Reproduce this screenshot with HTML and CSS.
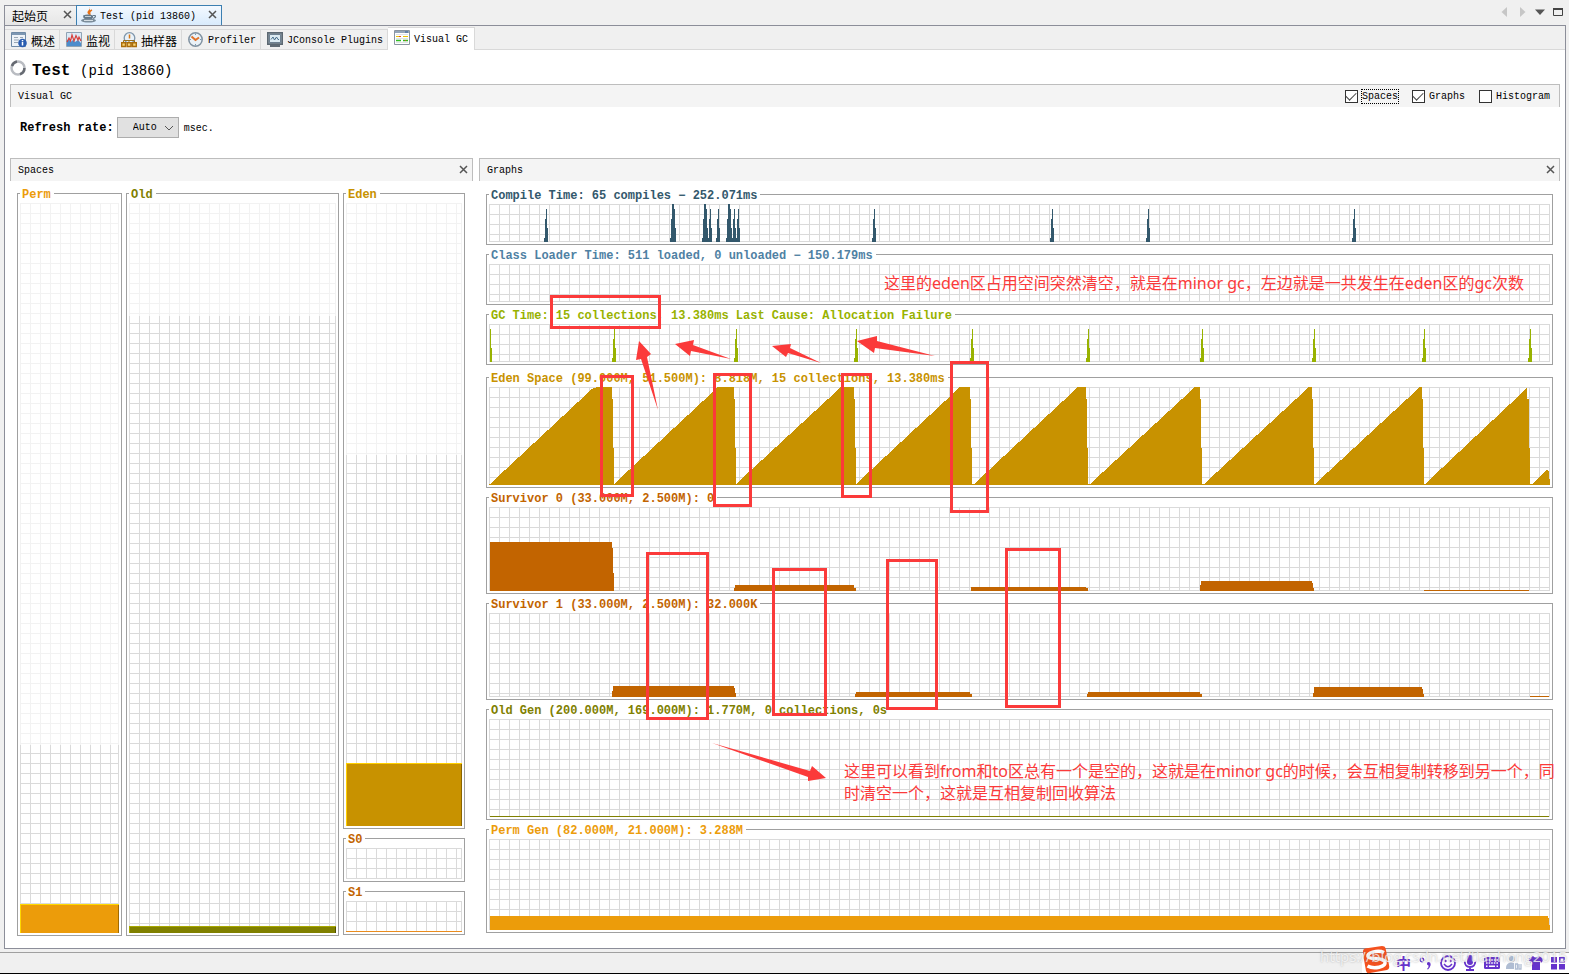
FILE: index.html
```html
<!DOCTYPE html>
<html lang="zh-CN">
<head>
<meta charset="utf-8">
<title>Java VisualVM - Test (pid 13860)</title>
<link rel="stylesheet" href="styles.css">
</head>
<body>
<div class="app">
  <header class="doc-bar">
    <nav class="doc-tabs">
      <div class="doc-tab"><a class="doc-link cjk" href="#start">起始页</a><button class="close" aria-label="关闭起始页"><svg viewBox="0 0 9 9"><path d="M1 1L8 8M8 1L1 8"/></svg></button></div>
      <div class="doc-tab doc-tab-active">
        <svg class="icon" viewBox="0 0 16 16"><path d="M8.500 0C10.500 2 6 3.500 6.500 6L8 8C8.500 5.500 10.500 4.500 9 2.500z" fill="#e8731a"/><path d="M11 3C8 4.500 8.500 5.500 9 8" fill="none" stroke="#e8731a" stroke-width="1.500"/><path d="M2 8.500Q7 6.500 12 8.500V10.500Q11 13 7.500 13T2.500 11z" fill="#64798a"/><path d="M12 8.500H14Q15.500 10 12 11.500" fill="none" stroke="#64798a" stroke-width="1.200"/><path d="M4 9.500H10" stroke="#c4d0d8"/><ellipse cx="7.500" cy="13.500" rx="7.500" ry="2" fill="#7b8d9b"/><path d="M3 13.500H12" stroke="#d5dee4"/></svg>
        <a class="doc-link" href="#test">Test (pid 13860)</a><button class="close" aria-label="关闭 Test"><svg viewBox="0 0 9 9"><path d="M1 1L8 8M8 1L1 8"/></svg></button>
      </div>
    </nav>
    <div class="window-tools">
      <button class="tool" aria-label="向左滚动"><svg viewBox="0 0 12 12"><path d="M9 1V11L3.500 6z" fill="#c6c6c6"/></svg></button>
      <button class="tool" aria-label="向右滚动"><svg viewBox="0 0 12 12"><path d="M4 1V11L9.500 6z" fill="#c6c6c6"/></svg></button>
      <button class="tool" aria-label="文档列表"><svg viewBox="0 0 12 12"><path d="M1 3.500H11L6 9z" fill="#555"/></svg></button>
      <button class="tool" aria-label="最大化"><svg viewBox="0 0 12 12"><path d="M1.500 2.500H10.500V9.500H1.500z" fill="none" stroke="#444"/><path d="M1 3H11" stroke="#444" stroke-width="2"/></svg></button>
    </div>
  </header>

  <main class="panel">
    <nav class="views">
      <a class="view cjk" href="#overview"><svg class="icon" viewBox="0 0 16 16"><path d="M.500 .500H14.500V14.500H.500z" fill="#eef3f8" stroke="#6f8aa6"/><path d="M1 2H14" stroke="#7d97b2" stroke-width="2"/><path d="M3 5.500H7M3 8H8M3 10.500H7M9 5.500H12" stroke="#9aa7b4"/><circle cx="11.500" cy="11" r="4.300" fill="#2a5db0"/><path d="M11.500 10V13.500M11.500 8V9.200" stroke="#fff" stroke-width="1.500"/></svg><span>概述</span></a>
      <a class="view cjk" href="#monitor"><svg class="icon" viewBox="0 0 16 16"><path d="M.500 .500H15.500V14.500H.500z" fill="#dceaf7" stroke="#8fa3b5"/><path d="M1 14V9L3 7 4.500 10 7 8 9 10 12 8 15 11V14z" fill="#4d8dcc"/><path d="M1 10L3 6 4.500 9 6 3 8 9 10 3.500 12 8 13 5 15 9" fill="none" stroke="#d8403c" stroke-width="1.200"/></svg><span>监视</span></a>
      <a class="view cjk" href="#sampler"><svg class="icon" viewBox="0 0 16 16"><circle cx="8.500" cy="6" r="5.300" fill="#e9f1f8" stroke="#7f96ab" stroke-width="1.300"/><path d="M8.500 2.500V6.500" stroke="#d87814" stroke-width="1.500"/><path d="M2.500 11V8.500H13.500V11M8 8.500V11" fill="none" stroke="#99711e"/><path d="M.700 10.700H4.500V14.500H.700zM6.200 10.700H10V14.500H6.200zM11.500 10.700H15.300V14.500H11.500z" fill="#f7d477" stroke="#ac6d09" stroke-width="1.400"/></svg><span>抽样器</span></a>
      <a class="view" href="#profiler"><svg class="icon" viewBox="0 0 16 16"><circle cx="7.500" cy="7.500" r="6.700" fill="#eaf1f7" stroke="#8192a1" stroke-width="1.500"/><path d="M7.500 1.500V3M7.500 12V13.500M1.500 7.500H3M12 7.500H13.500" stroke="#7997af"/><path d="M3.500 4.500L7.500 8 11 5.500" fill="none" stroke="#e0722a" stroke-width="2"/></svg><span>Profiler</span></a>
      <a class="view" href="#jconsole"><svg class="icon" viewBox="0 0 16 16"><path d="M.700 .700H15.300V12.300H.700z" fill="#8996a1" stroke="#5c6872" stroke-width="1.400"/><path d="M2.500 2.500H13.500V10.500H2.500z" fill="#dcebf2" stroke="#6d8090"/><path d="M4 7.500L6 5 7.500 8 9.500 5 11 7.500H12" fill="none" stroke="#456b89"/><path d="M3 14H13" stroke="#606b74" stroke-width="2"/></svg><span>JConsole Plugins</span></a>
      <a class="view view-active" href="#visualgc"><svg class="icon" viewBox="0 0 16 16"><path d="M.500 .500H15.500V14.500H.500z" fill="#fff" stroke="#8a95a0"/><path d="M1 2H15" stroke="#94a5b8" stroke-width="2"/><path d="M11 2H14" stroke="#315d94"/><path d="M2 4.500H14M2 8.500H14M2 12.500H14" stroke="#dfe4e8"/><path d="M2 6.500H7M9 6.500H14" stroke="#e8c500"/><path d="M2 10.500H7M9 10.500H14" stroke="#32bd24" stroke-width="1.500"/><path d="M5 6.500H7M11 10.500H12" stroke="#e34a25"/></svg><span>Visual GC</span></a>
    </nav>

    <div class="title-row">
      <svg class="icon" viewBox="0 0 16 16"><circle cx="8" cy="8" r="6.500" fill="none" stroke="#b9bcc2" stroke-width="2.500"/><path d="M2 6A6.500 6.500 0 0 1 7 1.600M14.400 8A6.500 6.500 0 0 1 10 14.200" fill="none" stroke="#666a72" stroke-width="2.500"/></svg>
      <h1 class="title">Test <span class="title-pid">(pid 13860)</span></h1>
    </div>

    <div class="bar">
      <h2 class="bar-title">Visual GC</h2>
      <div class="checks">
        <label class="check"><input type="checkbox" checked><span class="check-text focused">Spaces</span></label>
        <label class="check"><input type="checkbox" checked><span class="check-text">Graphs</span></label>
        <label class="check"><input type="checkbox"><span class="check-text">Histogram</span></label>
      </div>
    </div>

    <div class="refresh">
      <label class="refresh-label" for="rate">Refresh rate:</label>
      <span class="select-wrap"><select id="rate"><option>Auto</option></select><svg class="chevron" viewBox="0 0 10 6"><path d="M1 1L5 5 9 1"/></svg></span>
      <span>msec.</span>
    </div>

    <div class="columns">
      <section class="column">
        <div class="bar"><h2 class="bar-title">Spaces</h2><button class="close" aria-label="关闭 Spaces"><svg viewBox="0 0 9 9"><path d="M1 1L8 8M8 1L1 8"/></svg></button></div>
        <div class="spaces">
          <div class="box perm"><h3 class="box-title">Perm</h3><div class="plot"><div class="reserved" style="height:74.3%"></div><div class="used used-perm" style="height:4%"></div></div></div>
          <div class="box old"><h3 class="box-title">Old</h3><div class="plot"><div class="reserved" style="height:15.5%"></div><div class="used used-old" style="height:.9%"></div></div></div>
          <div class="young">
            <div class="box eden"><h3 class="box-title">Eden</h3><div class="plot"><div class="reserved" style="height:40.4%"></div><div class="used used-eden" style="height:10.1%"></div></div></div>
            <div class="box survivor"><h3 class="box-title">S0</h3><div class="plot"></div></div>
            <div class="box survivor"><h3 class="box-title">S1</h3><div class="plot"><div class="used used-survivor" style="height:1px"></div></div></div>
          </div>
        </div>
      </section>

      <section class="column">
        <div class="bar"><h2 class="bar-title">Graphs</h2><button class="close" aria-label="关闭 Graphs"><svg viewBox="0 0 9 9"><path d="M1 1L8 8M8 1L1 8"/></svg></button></div>
        <div class="graphs">
          <div class="box compile"><h3 class="box-title">Compile Time: 65 compiles − 252.071ms</h3><div class="plot">
            <svg class="chart" viewBox="0 0 1061 38" preserveAspectRatio="none">
              <defs>
                <path id="spike" d="M0 38V34H1V15H2V5H3V24H4V38z"/>
                <path id="burst" d="M0 38V34H1V15H2V0H4V5H5V24H6V38z"/>
              </defs>
              <use href="#spike" x="55"/><use href="#burst" x="181"/><use href="#burst" x="213"/><use href="#spike" x="219"/><use href="#spike" x="227"/><use href="#burst" x="237"/><use href="#spike" x="243"/><use href="#spike" x="247"/><use href="#spike" x="383"/><use href="#spike" x="561"/><use href="#spike" x="657"/><use href="#spike" x="863"/>
            </svg></div></div>
          <div class="box loader"><h3 class="box-title">Class Loader Time: 511 loaded, 0 unloaded − 150.179ms</h3><div class="plot"></div></div>
          <div class="box gc"><h3 class="box-title">GC Time: 15 collections, 13.380ms Last Cause: Allocation Failure</h3><div class="plot">
            <svg class="chart" viewBox="0 0 1061 38" preserveAspectRatio="none">
              <path d="M1 38V5H2V24H3V38z"/>
              <use href="#spike" x="123"/><use href="#spike" x="245"/><use href="#spike" x="365"/><use href="#spike" x="481"/><use href="#spike" x="597"/><use href="#spike" x="711"/><use href="#spike" x="823"/><use href="#spike" x="933"/><use href="#spike" x="1039"/>
            </svg></div></div>
          <div class="box eden graph-eden"><h3 class="box-title">Eden Space (99.000M, 51.500M): 8.818M, 15 collections, 13.380ms</h3><div class="plot">
            <svg class="chart" viewBox="0 0 1061 98" preserveAspectRatio="none">
              <path d="M1 97L103 2 108 0H123V12H124V61H125V97L229 0H245V12H246V61H247V97L352 0H365V12H366V61H367V97L471 0H481V12H482V61H483V97H485L589 0H597V12H598V61H599V97H601L706 0H711V12H712V61H713V97H715L820 0H823V12H824V61H825V97H826L931 0H933V12H934V61H935V97H936L1038 1V12H1040V61H1041V97H1043L1058 83 1060 84V92H1061V98H0V97z"/>
            </svg></div></div>
          <div class="box survivor"><h3 class="box-title">Survivor 0 (33.000M, 2.500M): 0</h3><div class="plot">
            <svg class="chart" viewBox="0 0 1061 84" preserveAspectRatio="none">
              <path d="M1 84V35H123V41H124V66H125V84zM245 84V81H246V78H365V81H367V84zM482 84V80H597V81H599V84zM711 84V78H712V74H823V76H824V81H825V84zM935 83H1040V84H935z"/>
            </svg></div></div>
          <div class="box survivor"><h3 class="box-title">Survivor 1 (33.000M, 2.500M): 32.000K</h3><div class="plot">
            <svg class="chart" viewBox="0 0 1061 84" preserveAspectRatio="none">
              <path d="M123 84V78H124V73H245V75H246V80H247V84zM366 84V81H367V79H481V81H483V84zM598 84V81H599V79H711V81H713V84zM824 84V80H825V74H933V76H934V81H935V84zM1041 83H1060V84H1041z"/>
            </svg></div></div>
          <div class="box old"><h3 class="box-title">Old Gen (200.000M, 169.000M): 1.770M, 0 collections, 0s</h3><div class="plot">
            <svg class="chart" viewBox="0 0 1061 98" preserveAspectRatio="none"><path d="M1 97H1060V98H1z"/></svg></div></div>
          <div class="box perm"><h3 class="box-title">Perm Gen (82.000M, 21.000M): 3.288M</h3><div class="plot">
            <svg class="chart" viewBox="0 0 1061 91" preserveAspectRatio="none"><path d="M1 91V77H1059V79H1060V86H1061V91z"/></svg></div></div>
        </div>
      </section>
    </div>
  </main>

  <footer class="status">
    <div class="ime">
      <svg class="ime-logo" viewBox="0 0 28 28"><path d="M1 5Q1 3 3 2.500L20 0Q23 0 23.500 2L27 19Q28 23 25 24L8 27Q5 28 4 25L1 8z" fill="#f4511e"/><path d="M22 6.500C16 3.500 5 6.500 6 10.500 7 14 22 11 23 16 24 21 12 23.500 5.500 20" fill="none" stroke="#fff" stroke-width="3.500"/></svg>
      <span class="ime-mode">中</span>
      <svg class="ime-icon" viewBox="0 0 16 16"><circle cx="4" cy="5" r="1.700" fill="none" stroke="#6633cc" stroke-width="1.400"/><path d="M9 8Q10 6.500 12 7.500 14 10 10 14.500L9 14Q11 12 10.500 10.500 8.500 10 9 8z" fill="#6633cc"/></svg>
      <svg class="ime-icon" viewBox="0 0 16 16"><circle cx="8" cy="8" r="7" fill="none" stroke="#6633cc" stroke-width="1.800"/><circle cx="5.500" cy="6" r="1.200" fill="#6633cc"/><circle cx="10.500" cy="6" r="1.200" fill="#6633cc"/><path d="M4 9Q8 14.500 12 9" fill="none" stroke="#6633cc" stroke-width="1.400"/></svg>
      <svg class="ime-icon" viewBox="0 0 16 16"><rect x="5" y="0" width="6" height="10" rx="3" fill="#6633cc"/><path d="M2.700 6.500Q3 12 8 12T13.300 6.500M8 12V15M4 15H12" fill="none" stroke="#6633cc" stroke-width="1.800"/></svg>
      <svg class="ime-icon" viewBox="0 0 16 16"><rect x="0" y="2" width="16" height="12" rx="1.500" fill="#6633cc"/><path d="M2 5H14M2 8H14" stroke="#fff" stroke-width="1.600" stroke-dasharray="1.600 1"/><path d="M2 11.300H3.500M5 11.300H11M12.500 11.300H14" stroke="#fff" stroke-width="1.500"/></svg>
      <svg class="ime-icon" viewBox="0 0 16 16"><circle cx="6" cy="4" r="3" fill="#b0bdd3"/><path d="M0 13Q0 8 5 7.500L8 8V14H0z" fill="#b0bdd3"/><path d="M7 9V13.500M9.500 9H11.500V14H9.500zM13 9V14H15V9" fill="#fff" stroke="#b0bdd3" stroke-width="1.300"/></svg>
      <svg class="ime-icon" viewBox="0 0 16 16"><path d="M5 1Q8 4 11 1L15.500 4 13.800 7.500 12 7V15H4V7L2.200 7.500 .500 4z" fill="#6633cc"/></svg>
      <svg class="ime-icon" viewBox="0 0 16 16"><path d="M1 2H7V7.500H1zM1 9H7V14.500H1zM9 9H15V14.500H9z" fill="#6633cc"/><path d="M9.800 2.800H14.200V6.700H9.800z" fill="none" stroke="#6633cc" stroke-width="1.600"/></svg>
    </div>
  </footer>

  <div class="notes">
    <svg class="marks" viewBox="0 0 1569 974" preserveAspectRatio="none">
      <g class="frames">
        <rect x="551.500" y="296.500" width="108" height="31"/>
        <rect x="601.500" y="376.500" width="31" height="119"/>
        <rect x="714.500" y="374.500" width="36" height="131"/>
        <rect x="842.500" y="374.500" width="28" height="122"/>
        <rect x="951.500" y="362.500" width="36" height="149"/>
        <rect x="647.500" y="553.500" width="60" height="165"/>
        <rect x="773.500" y="569.500" width="52" height="145"/>
        <rect x="887.500" y="560.500" width="49" height="148"/>
        <rect x="1006.500" y="549.500" width="53" height="157"/>
      </g>
      <g class="arrows">
        <path d="M639 341L651 354 647 357 658 410 641 359 636 360z"/>
        <path d="M675 344L694 340 693 345 731 359 691 351 690 356z"/>
        <path d="M772 346L791 344 790 348 821 363 788 353 786 357z"/>
        <path d="M857 341L877 336 877 341 935 356 875 348 874 353z"/>
        <path d="M826 778L812 766 810 771 712 743 808 777 808 781z"/>
      </g>
    </svg>
    <p class="note note-minor">这里的eden区占用空间突然清空，就是在minor gc，左边就是一共发生在eden区的gc次数</p>
    <p class="note note-copy">这里可以看到from和to区总有一个是空的，这就是在minor gc的时候，会互相复制转移到另一个，同<br>时清空一个，这就是互相复制回收算法</p>
    <p class="watermark">https://blog.csdn.net/tianhong2015</p>
  </div>
</div>
</body>
</html>
```
FILE: styles.css
```css
* { box-sizing: border-box; }
body {
  margin: 0;
  background: #f0f0f0;
  color: #000;
  font: 10px/14px "Liberation Mono", "Noto Sans CJK SC", monospace;
}
h1, h2, h3, p { margin: 0; }
a { color: inherit; text-decoration: none; }
button { padding: 0; border: 0; background: none; }
.cjk { font: 12px/14px "Noto Sans CJK SC", sans-serif; }
.icon { width: 16px; height: 16px; flex: none; }

.app { position: relative; display: flex; flex-direction: column; min-height: 100vh; }

/* Document tabs */
.doc-bar { display: flex; justify-content: space-between; height: 25px; padding: 5px 5px 0 4px; }
.doc-tabs { display: flex; }
.doc-tab {
  display: flex; align-items: center; gap: 3px;
  padding: 0 4px 0 7px;
  border: 1px solid #8c8e99; border-width: 1px 0 0 1px;
  background: linear-gradient(#f3f3f3, #e6e6e6);
}
.doc-tab:first-child { width: 72px; justify-content: space-between; }
.doc-tab-active { border: 1px solid #3c7fb1; border-bottom: 0; padding-left: 4px; background: linear-gradient(#f4f9ff, #d9ebfc); }
.doc-tab-active .icon { margin-bottom: 2px; }
.doc-tab-active .doc-link { padding-top: 2px; margin-right: 9px; }
.doc-link { white-space: nowrap; }
.close { display: flex; width: 9px; height: 9px; }
.close svg { width: 9px; height: 9px; fill: none; stroke: #555; stroke-width: 1.5; }
.doc-tab .close { margin-bottom: 2px; }
.window-tools { display: flex; gap: 6px; }
.tool { width: 12px; height: 14px; display: flex; align-items: center; }
.tool svg { width: 12px; height: 12px; }

/* Main panel */
.panel {
  flex: 1; display: flex; flex-direction: column;
  margin: 0 3px 0 4px;
  border: 1px solid #8c8e99;
  background: #fff;
}
.views { display: flex; height: 24px; padding-top: 3px; border-bottom: 1px solid #d9d9d9; background: #f0f0f0; }
.view {
  display: flex; align-items: center; gap: 4px;
  padding: 0 4px 0 6px;
  border: 1px solid #d9d9d9; border-width: 1px 1px 0 0;
  white-space: nowrap;
}
.view span { padding-top: 3px; }
.view-active { margin-top: -2px; margin-bottom: -1px; padding-right: 6px; padding-bottom: 2px; background: #fff; }

.title-row { display: flex; align-items: center; gap: 6px; height: 34px; padding: 8px 5px 0; }
.title-row .icon { margin-bottom: 7px; }
.title { font-size: 16px; line-height: 20px; }
.title-pid { font-size: 14px; font-weight: 400; }

.bar {
  display: flex; align-items: center; justify-content: space-between;
  height: 23px; padding: 0 4px 0 7px;
  border: 1px solid #bdbdbd; border-bottom: 0;
  background: #f4f4f4;
}
.panel > .bar { margin: 0 5px; }
.bar-title { padding-top: 2px; font-size: 10px; line-height: 14px; font-weight: 400; }
.bar .close { margin-bottom: 1px; }
.checks { display: flex; gap: 13px; padding: 1px 4px 0 0; }
.check { display: flex; align-items: center; gap: 3px; }
.check input {
  appearance: none; width: 13px; height: 13px; margin: 0;
  border: 1px solid #333; background: #fff;
  display: grid; place-items: center;
}
.check input:checked::before {
  content: ""; width: 9px; height: 5px; margin-top: -3px;
  border: solid #444; border-width: 0 0 1px 1px;
  transform: rotate(-45deg);
}
.check-text { padding: 0 1px; line-height: 13px; border: 1px dotted transparent; border-width: 1px 0; }
.focused { border: 1px dotted #000; padding: 0; }

.refresh { display: flex; align-items: center; gap: 3px; height: 51px; padding: 0 15px 10px; }
.refresh-label { font-size: 12px; font-weight: 700; }
.refresh > span:last-child { padding: 2px 0 0 2px; }
.select-wrap { display: grid; align-items: center; }
.select-wrap > * { grid-area: 1 / 1; }
.refresh select {
  appearance: none; width: 62px; height: 21px; padding: 1px 0 0 15px;
  border: 1px solid #adadad; border-radius: 0; background: #e1e1e1;
  font: inherit;
}
.chevron { justify-self: end; width: 10px; height: 6px; margin-right: 5px; fill: none; stroke: #555; pointer-events: none; }

/* Spaces and graphs */
.columns { flex: 1; display: grid; grid-template-columns: 463fr 1081fr; gap: 6px; padding: 0 5px 12px; }
.column { display: flex; flex-direction: column; min-width: 0; }
.spaces { flex: 1; display: grid; grid-template-columns: 105fr 213fr 122fr; gap: 4px; padding: 12px 8px 0 7px; }
.young { display: grid; grid-template-rows: 636fr 44fr 44fr; gap: 9px; padding-bottom: 1px; }
.graphs {
  flex: 1; display: grid; gap: 9px; padding: 13px 7px 3px;
  grid-template-rows: 51fr 51fr 51fr 114fr 97fr 97fr 111fr 104fr;
}
.graph-eden { margin-top: 3px; }
.box { display: flex; flex-direction: column; min-height: 0; padding: 0 2px 2px; border: 1px solid #a0a0a0; }
.box-title {
  align-self: flex-start;
  margin: -6px 0 1px; padding: 0 3px 0 2px;
  background: #fff; color: var(--tone);
  font-size: 12px; line-height: 14px; font-weight: 700; white-space: nowrap;
}
.plot {
  --line: #dadada;
  flex: 1; display: flex; flex-direction: column; min-height: 0;
  background:
    linear-gradient(var(--line), var(--line)) right / 1px 100% no-repeat,
    linear-gradient(var(--line), var(--line)) bottom / 100% 1px no-repeat,
    linear-gradient(to right, var(--line) 1px, transparent 1px) 0 0 / 10px 10px,
    linear-gradient(var(--line) 1px, transparent 1px) 0 0 / 10px 10px;
}
.chart { flex: 1; width: 100%; height: 0; fill: var(--tone); shape-rendering: crispEdges; }
.reserved { background: rgb(255 255 255 / 65%); }
.used { margin-top: auto; background: var(--tone); }
.used-perm { border: 1px solid #ffd800; border-width: 1px 0 0 1px; box-shadow: inset -1px 0 #a06a00; }
.used-old { border: 1px solid #a8a800; border-width: 1px 0 0 1px; box-shadow: inset -1px 0 #505000; }
.used-eden { border: 1px solid #ffd000; border-width: 1px 0 0 1px; box-shadow: inset -1px 0 #8a6500; }
.used-survivor { background: #ea8c1e; }

.compile { --tone: #33586c; }
.loader { --tone: #4f81a3; }
.gc { --tone: #98b200; }
.eden { --tone: #c89200; }
.survivor { --tone: #c26400; }
.old { --tone: #808000; }
.perm { --tone: #ec9c0a; }

/* Status bar */
.status {
  display: flex; justify-content: flex-end;
  height: 22px; margin-top: 3px;
  border-top: 1px solid #a0a0a0; border-bottom: 1px solid #000;
}
.ime { display: flex; align-items: center; gap: 6px; padding-right: 3px; background: #fff; }
.ime-logo { width: 28px; height: 28px; margin: -6px 0 0; }
.ime-mode { width: 16px; color: #63c; font: 700 15px/16px "Noto Sans CJK SC", sans-serif; }
.ime-icon { width: 16px; height: 16px; }

/* Annotations drawn over the window */
.notes { position: absolute; inset: 0; overflow: hidden; pointer-events: none; }
.marks { display: block; width: 100%; height: 100%; }
.frames { fill: none; stroke: #fb3a3a; stroke-width: 3; }
.arrows { fill: #fb3a3a; }
.note { position: absolute; color: #fb3a3a; font: 16px/22px "Noto Sans", "Noto Sans CJK SC", sans-serif; white-space: nowrap; }
.note-minor { left: 884px; top: 272px; }
.note-copy { left: 844px; top: 760px; }
.watermark {
  position: absolute; right: 2px; bottom: 8px;
  color: rgb(255 255 255 / 75%); text-shadow: 0 0 2px rgb(120 120 120 / 60%);
  font: 15px/20px "Open Sans", sans-serif;
}
```
